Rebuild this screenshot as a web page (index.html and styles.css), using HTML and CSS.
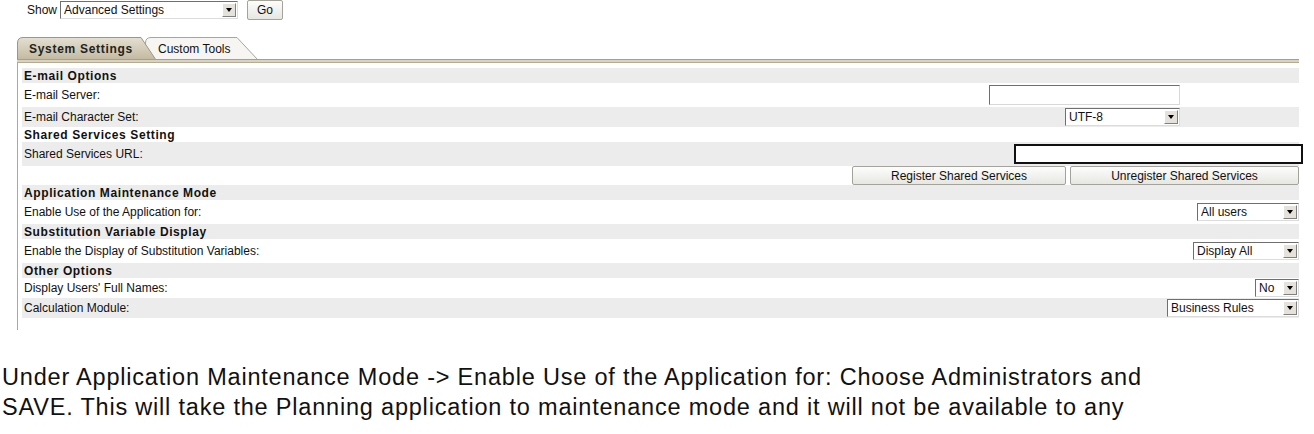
FILE: index.html
```html
<!DOCTYPE html>
<html lang="en">
<head>
  <meta charset="UTF-8" />
  <meta name="viewport" content="width=device-width" />
  <title>System Settings</title>
  <link rel="stylesheet" href="styles.css">
</head>
<body>
  <div class="topbar">
    <span class="show-label">Show</span>
    <div class="select w-show"><span class="select-text">Advanced Settings</span><span class="arrow"></span></div>
    <button class="btn go">Go</button>
  </div>

  <div class="tabs">
    <div class="tab tab-active">
      <svg class="tab-shape" width="140" height="23" viewBox="0 0 140 23">
        <defs>
          <linearGradient id="g-active" x1="0" y1="0" x2="0" y2="1">
            <stop offset="0" stop-color="#e4dfd1" />
            <stop offset="1" stop-color="#c2b99f" />
          </linearGradient>
        </defs>
        <path d="M0.5 23 V6 Q0.5 0.5 6 0.5 H124 L139 23 Z" fill="url(#g-active)" stroke="#9e9682" />
      </svg>
      <span class="tab-text">System Settings</span>
    </div>
    <div class="tab tab-idle">
      <svg class="tab-shape" width="114" height="23" viewBox="0 0 114 23">
        <path d="M0.5 23 V6 Q0.5 0.5 6 0.5 H92 L113 23 Z" fill="#f6f5f1" stroke="#aaa597" />
      </svg>
      <span class="tab-text">Custom Tools</span>
    </div>
  </div>
  <div class="tabline"></div>

  <div class="panel">
    <div class="row head gray">E-mail Options</div>
    <div class="row tall">
      <span class="label">E-mail Server:</span>
      <div class="textbox w-server"></div>
    </div>
    <div class="row gray">
      <span class="label">E-mail Character Set:</span>
      <div class="select w-charset"><span class="select-text">UTF-8</span><span class="arrow"></span></div>
    </div>
    <div class="row head">Shared Services Setting</div>
    <div class="row tall gray">
      <span class="label">Shared Services URL:</span>
      <div class="textbox focused w-url"></div>
    </div>
    <div class="row buttons">
      <button class="btn wide w-reg">Register Shared Services</button>
      <button class="btn wide w-unreg">Unregister Shared Services</button>
    </div>
    <div class="row head gray">Application Maintenance Mode</div>
    <div class="row tall">
      <span class="label">Enable Use of the Application for:</span>
      <div class="select w-users"><span class="select-text">All users</span><span class="arrow"></span></div>
    </div>
    <div class="row head gray">Substitution Variable Display</div>
    <div class="row tall">
      <span class="label">Enable the Display of Substitution Variables:</span>
      <div class="select w-display"><span class="select-text">Display All</span><span class="arrow"></span></div>
    </div>
    <div class="row head gray">Other Options</div>
    <div class="row">
      <span class="label">Display Users' Full Names:</span>
      <div class="select w-names"><span class="select-text">No</span><span class="arrow"></span></div>
    </div>
    <div class="row gray">
      <span class="label">Calculation Module:</span>
      <div class="select w-calc"><span class="select-text">Business Rules</span><span class="arrow"></span></div>
    </div>
  </div>

  <p class="note">Under Application Maintenance Mode -&gt; Enable Use of the Application for: Choose Administrators and<br>SAVE. This will take the Planning application to maintenance mode and it will not be available to any</p>
</body>
</html>
```

FILE: styles.css
```css
body {
  margin: 0;
  background: #fff;
  color: #111;
  font-family: "Liberation Sans", Arial, sans-serif;
  font-size: 12px;
}

/* top "Show" bar */
.topbar {
  display: flex;
  align-items: center;
  height: 20px;
  padding-left: 27px;
}
.show-label {
  margin-right: 3px;
}
.go {
  margin-left: 9px;
  width: 36px;
  height: 20px;
}

/* fake XP controls */
.select {
  display: flex;
  align-items: center;
  box-sizing: border-box;
  height: 18px;
  background: #fff;
  border-top: 1px solid #6f6f6f;
  border-left: 1px solid #6f6f6f;
  border-right: 1px solid #dcdcdc;
  border-bottom: 1px solid #dcdcdc;
  padding: 0 1px 0 3px;
}
.select-text {
  flex: 1;
  white-space: nowrap;
  overflow: hidden;
}
.arrow {
  position: relative;
  width: 14px;
  height: 14px;
  box-sizing: border-box;
  background: #e4e2da;
  border: 1px solid;
  border-color: #fff #808080 #808080 #fff;
}
.arrow::after {
  content: "";
  position: absolute;
  left: 3px;
  top: 4px;
  border-left: 3px solid transparent;
  border-right: 3px solid transparent;
  border-top: 4px solid #000;
}
.textbox {
  box-sizing: border-box;
  height: 20px;
  background: #fff;
  border-top: 1px solid #6f6f6f;
  border-left: 1px solid #6f6f6f;
  border-right: 1px solid #d8d8d8;
  border-bottom: 1px solid #d8d8d8;
}
.textbox.focused {
  border: 2px solid #111;
}
.btn {
  font-family: "Liberation Sans", Arial, sans-serif;
  font-size: 12px;
  color: #111;
  background: linear-gradient(#fdfdfd, #e6e6e2);
  border: 1px solid #a3a39c;
  border-radius: 2px;
  padding: 0;
}

.w-show { width: 178px; height: 18px; }
.w-server { width: 191px; margin-right: 119px; }
.w-charset { width: 115px; margin-right: 119px; }
.w-url { width: 289px; margin-right: -4px; }
.w-users { width: 102px; }
.w-display { width: 106px; }
.w-names { width: 44px; }
.w-calc { width: 132px; }

/* tabs */
.tabs {
  display: flex;
  margin: 17px 0 0 17px;
  height: 23px;
}
.tab {
  position: relative;
  display: flex;
  align-items: center;
  height: 23px;
}
.tab-shape {
  position: absolute;
  left: 0;
  top: 0;
}
.tab-text {
  position: relative;
}
.tab-active {
  z-index: 2;
  width: 140px;
  font-weight: bold;
  font-size: 12px;
  letter-spacing: 0.7px;
}
.tab-active .tab-text {
  padding-left: 12px;
  color: #222;
}
.tab-idle {
  z-index: 1;
  width: 114px;
  margin-left: -12px;
}
.tab-idle .tab-text {
  padding-left: 13px;
}
.tabline {
  margin: -1px 15px 0 17px;
  height: 4px;
  box-sizing: border-box;
  background: #d8d2c2;
  border-top: 1px solid #a89f86;
  border-bottom: 1px solid #b4ab92;
  position: relative;
  z-index: 3;
}

/* settings panel */
.panel {
  margin: 0 15px 0 17px;
  padding: 5px 0 12px 4px;
  border-left: 1px solid #a8a8a8;
}
.row {
  display: flex;
  align-items: center;
  justify-content: space-between;
  height: 20px;
  padding: 0 0 0 2px;
}
.row.tall {
  height: 24px;
}
.row.head {
  height: 15px;
  font-weight: bold;
  font-size: 12px;
  letter-spacing: 0.6px;
}
.row.gray {
  background: #ececec;
}
.row.buttons {
  justify-content: flex-end;
  height: 19px;
}
.wide {
  height: 19px;
}
.w-reg { width: 214px; margin-right: 4px; }
.w-unreg { width: 229px; }

/* caption under the screenshot */
.note {
  margin: 32px 0 0 2px;
  font-size: 23.5px;
  letter-spacing: 0.8px;
  line-height: 30px;
  color: #111;
}
```
